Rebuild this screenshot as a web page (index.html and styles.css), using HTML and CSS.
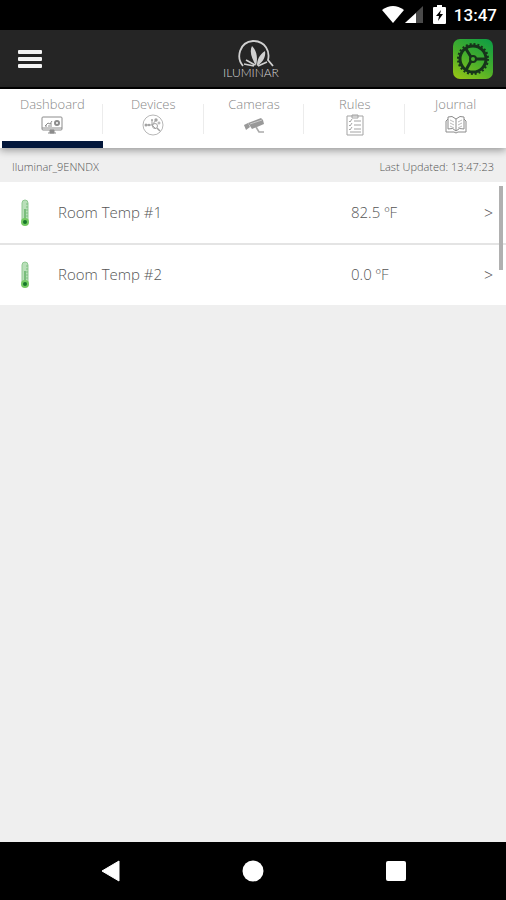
FILE: index.html
```html
<!DOCTYPE html>
<html lang="en">
<head>
    <meta charset="UTF-8">
    <meta name="viewport" content="width=device-width, initial-scale=1.0">
    <title>Iluminar Dashboard</title>
    <link rel="stylesheet" href="styles.css">
</head>
<body>
    <!-- Phone status bar -->
    <div class="status-bar">
        <svg width="24" height="20" viewBox="0 0 24 20"><path d="M1 5Q12-3 23 5L12 18Z" fill="#fff"/></svg>
        <svg class="signal" width="18" height="20" viewBox="0 0 18 20"><path d="M0 18L18 1V18Z" fill="#4a4a4a"/><path d="M0 18L11 8V18Z" fill="#fff"/></svg>
        <svg class="battery" width="13" height="20" viewBox="0 0 13 20"><path d="M4 0H9V2H12Q13 2 13 3V18Q13 19 12 19H1Q0 19 0 18V3Q0 2 1 2H4Z" fill="#fff"/><path d="M8 5L3 11H6L5 16L10 9H7Z" fill="#000"/></svg>
        <span class="clock">13:47</span>
    </div>

    <header class="header">
        <button type="button" class="menu-button" aria-label="Menu">
            <span class="menu-line"></span>
            <span class="menu-line"></span>
            <span class="menu-line"></span>
        </button>
        <svg class="logo" width="60" height="42" viewBox="0 0 60 42" fill="none" stroke="#d0d0d0">
            <path d="M22 28C15 20 18 4 32 3C45 3 49 14 47 22L52 28" stroke-width="1.8"/>
            <path d="M31 8C28 14 31 20 35 28C37 20 36 13 31 8ZM44 13C38 17 36 22 36 28C42 24 45 19 44 13Z" fill="#d0d0d0" stroke="none"/>
            <path d="M34 27L25 22M33 28L23 26M37 28L46 24" stroke-width="1.6"/>
            <text x="30" y="39" text-anchor="middle" class="logo-text">ILUMINAR</text>
        </svg>
        <button type="button" class="settings-button" aria-label="Settings">
            <svg width="40" height="40" viewBox="0 0 40 40" fill="none" stroke="#17331b">
                <circle cx="20" cy="20" r="15" stroke-width="2" stroke-dasharray="2 1.93"/>
                <circle cx="20" cy="20" r="13" stroke-width="3"/>
                <circle cx="20" cy="20" r="3" stroke-width="2"/>
                <path d="M22 20H32M18 18L13 10M18 22L13 31" stroke-width="3"/>
            </svg>
        </button>
    </header>

    <!-- Tabs -->
    <nav class="tabs">
        <a href="#dashboard" class="tab active">
            <span>Dashboard</span>
            <svg width="24" height="22" viewBox="0 0 24 22" fill="none" stroke="#8c8c8c">
                <rect x="2" y="3" width="20" height="13" rx="1"/>
                <path d="M2 14H22M5 12L8 9L10 10L12 7M6 13V11M9 13V11M11 13V9"/>
                <circle cx="17" cy="9" r="2" stroke-width="2"/>
                <path d="M10 16H14V19H10Z" fill="#8c8c8c"/><path d="M8 19H16"/>
            </svg>
        </a>
        <a href="#devices" class="tab">
            <span>Devices</span>
            <svg width="24" height="22" viewBox="0 0 24 22" fill="none" stroke="#a3a3a3">
                <circle cx="12" cy="11" r="10" stroke-width=".8"/>
                <path d="M5 11H11L15 6M11 11L15 15M11 11V6" />
                <g fill="#a3a3a3" stroke="none"><circle cx="5" cy="11" r="1.5"/><circle cx="8" cy="11" r="1.3"/><circle cx="15" cy="6" r="1.7"/><circle cx="11" cy="6" r="1"/></g>
                <circle cx="14" cy="12" r="2.5"/><path d="M16 14L19 17" stroke-width="1.5"/><circle cx="18" cy="9" r="1"/>
            </svg>
        </a>
        <a href="#cameras" class="tab">
            <span>Cameras</span>
            <svg width="24" height="22" viewBox="0 0 24 22">
                <path d="M6 9L19 4L21 6L22 10L10 15Z" fill="#999"/>
                <path d="M8 10L20 6" stroke="#c8c8c8" fill="none"/>
                <path d="M2 11L6 9L8 13L4 16Z" fill="#999"/>
                <path d="M14 13L17 18H22" stroke="#aaa" stroke-width="1.6" fill="none"/>
            </svg>
        </a>
        <a href="#rules" class="tab">
            <span>Rules</span>
            <svg width="24" height="22" viewBox="0 0 24 22" fill="none" stroke="#a3a3a3">
                <path d="M4 2H20V21H4Z"/><path d="M9 1H15V4H9Z"/>
                <path d="M6 7L7 8L9 5M11 7H18M6 11L7 12L9 9M11 11H18M6 15L7 16L9 13M11 15H18M7 18H18"/>
            </svg>
        </a>
        <a href="#journal" class="tab">
            <span>Journal</span>
            <svg width="24" height="22" viewBox="0 0 24 22" fill="none" stroke="#8c8c8c">
                <path d="M12 5Q8 1 4 3V15Q9 13 12 17Q15 13 20 15V3Q16 1 12 5V17"/>
                <path d="M4 5L2 7V18H10Q12 20 14 18H22V7L20 5"/>
                <path d="M6 6L10 8M6 9L10 11M6 12L10 14M18 6L14 8M18 9L14 11M18 12L14 14" stroke-width=".6"/>
            </svg>
        </a>
    </nav>

    <main class="content">
        <div class="info-bar">
            <span>Iluminar_9ENNDX</span>
            <span>Last Updated: 13:47:23</span>
        </div>
        <div class="sensor-list">
            <a href="#sensor1" class="sensor">
                <svg width="10" height="28" viewBox="0 0 10 28"><rect x="2" y="1" width="6" height="23" rx="3" fill="#b9dfb9" stroke="#8fc891"/><path d="M5 10V22" stroke="#79bd7c" stroke-width="2"/><path d="M6 5H8M6 8H8M6 11H8M6 14H8M6 17H8" stroke="#7dc080"/><circle cx="5" cy="23" r="4" fill="#72c860"/><circle cx="5" cy="23" r="2" fill="#16762a"/></svg>
                <span class="sensor-name">Room Temp #1</span>
                <span class="sensor-value">82.5 ºF</span>
                <span class="arrow">&gt;</span>
            </a>
            <a href="#sensor2" class="sensor">
                <svg width="10" height="28" viewBox="0 0 10 28"><rect x="2" y="1" width="6" height="23" rx="3" fill="#b9dfb9" stroke="#8fc891"/><path d="M5 10V22" stroke="#79bd7c" stroke-width="2"/><path d="M6 5H8M6 8H8M6 11H8M6 14H8M6 17H8" stroke="#7dc080"/><circle cx="5" cy="23" r="4" fill="#72c860"/><circle cx="5" cy="23" r="2" fill="#16762a"/></svg>
                <span class="sensor-name">Room Temp #2</span>
                <span class="sensor-value">0.0 ºF</span>
                <span class="arrow">&gt;</span>
            </a>
            <div class="scroll-thumb"></div>
        </div>
    </main>

    <!-- Phone navigation buttons -->
    <footer class="phone-nav">
        <button type="button" aria-label="Back"><svg width="22" height="22" viewBox="0 0 22 22"><path d="M20 1V21L3 11Z" fill="#fff" stroke="#fff" stroke-linejoin="round"/></svg></button>
        <button type="button" aria-label="Home"><svg width="22" height="22" viewBox="0 0 22 22"><circle cx="11" cy="11" r="10.5" fill="#fff"/></svg></button>
        <button type="button" aria-label="Recent apps"><svg width="22" height="22" viewBox="0 0 22 22"><rect x="1" y="1" width="20" height="20" rx="2" fill="#fff"/></svg></button>
    </footer>
</body>
</html>
```
FILE: styles.css
```css
* {
    box-sizing: border-box;
}
body {
    margin: 0;
    min-height: 100vh;
    display: flex;
    flex-direction: column;
    background-color: #efefef;
    font-family: "Open Sans", "Noto Sans", sans-serif;
    font-weight: 300;
}
svg {
    display: block;
}
button {
    padding: 0;
    border: none;
    background: none;
    cursor: pointer;
}
a {
    color: inherit;
    text-decoration: none;
}
.status-bar {
    display: flex;
    justify-content: flex-end;
    align-items: center;
    height: 30px;
    padding-right: 9px;
    background-color: #000;
    color: #fff;
}
.battery {
    margin: 0 8px 0 10px;
}
.clock {
    font-family: Roboto, sans-serif;
    font-size: 17px;
    font-weight: 500;
}
.header {
    display: grid;
    grid-template-columns: 1fr auto 1fr;
    align-items: center;
    height: 59px;
    padding: 0 13px 0 18px;
    background-color: #252525;
    border-bottom: 2px solid #000;
}
.menu-button {
    display: flex;
    flex-direction: column;
    gap: 3px;
    width: 24px;
}
.menu-line {
    width: 24px;
    height: 4px;
    border-radius: 1px;
    background-color: #f4f4f4;
}
.logo {
    margin-right: 9px;
}
.logo-text {
    font-family: Lato, sans-serif;
    font-size: 12px;
    font-weight: 300;
    fill: #d8d8d8;
    stroke: none;
}
.settings-button {
    justify-self: end;
    border-radius: 7px;
    background: linear-gradient(30deg, #9cc814, #45ad2c 50%, #0a9c45);
}
.tabs {
    display: flex;
    position: relative;
    height: 59px;
    padding-left: 2px;
    background-color: #fff;
    box-shadow: 0 2px 8px rgba(0, 0, 0, 0.4);
}
.tab {
    flex: 1;
    display: flex;
    flex-direction: column;
    align-items: center;
    padding-top: 5px;
    color: #888;
    font-size: 13px;
    line-height: 20px;
    border-bottom: 7px solid transparent;
    /* short divider on the right of each tab */
    background: linear-gradient(#ececec, #ececec) right 15px / 1px 30px no-repeat;
}
.tab:last-child {
    background: none;
}
.tab.active {
    border-bottom-color: #03173b;
}
.content {
    flex: 1;
}
.info-bar {
    display: flex;
    justify-content: space-between;
    align-items: center;
    height: 34px;
    padding: 2px 12px 0;
    color: #555;
    font-size: 11px;
}
.sensor-list {
    position: relative;
    background-color: #fff;
}
.sensor {
    display: grid;
    grid-template-columns: 38px 1fr 133px 10px;
    align-items: center;
    height: 61px;
    padding: 0 12px 0 20px;
    color: #555;
    font-size: 15px;
}
.sensor + .sensor {
    height: 62px;
    border-top: 2px solid #e4e4e4;
}
.sensor-name,
.sensor-value {
    padding-bottom: 2px;
}
.arrow {
    color: #555;
    font-size: 16px;
}
.scroll-thumb {
    position: absolute;
    top: 4px;
    right: 3px;
    width: 4px;
    height: 84px;
    background-color: #b0b0b0;
}
.phone-nav {
    display: flex;
    justify-content: center;
    align-items: center;
    gap: 121px;
    height: 58px;
    background-color: #000;
}
```
